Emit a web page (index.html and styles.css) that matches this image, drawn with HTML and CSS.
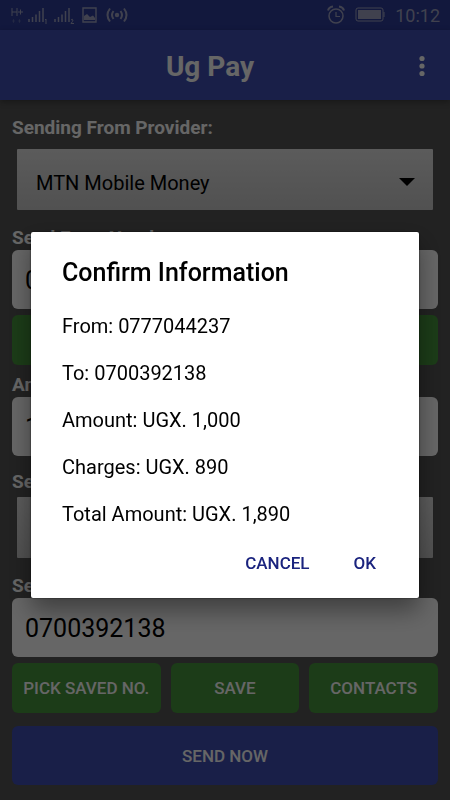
FILE: index.html
```html
<!DOCTYPE html>
<html lang="en">
<head>
    <meta charset="utf-8" />
    <meta name="viewport" content="width=device-width, initial-scale=1">
    <title>Ug Pay</title>
    <link rel="stylesheet" href="styles.css">
</head>

<body>
    <div class="status-bar">
        <svg width="120" height="20" viewBox="0 0 120 20" fill="none" stroke="currentColor">
            <!-- network type -->
            <path d="M2 3v8M7 3v8M2 7h5M8 7h5M10.500 4.500v5" />
            <path d="M2 16h3M3.500 14v4M8 16h3M9.500 14v4" opacity=".3" />
            <!-- signal 1 -->
            <path d="M19 14v3M22.500 12v5M26 9.500v7.500M29.500 6v11M33 3v14" stroke-width="1.500" />
            <path d="M35 15l1-1v5" />
            <!-- signal 2 -->
            <path d="M45 14v3M48.500 12v5M52 9.500v7.500M55.500 6v11M59 3v14" stroke-width="1.500" />
            <path d="M61 15q1.500-1.500 2 0q0 1-2 3.500h3" />
            <!-- picture -->
            <path d="M73 3h13v14H73z" stroke-width="1.400" />
            <path d="M74 15v-4l3-2 3 3 3-1.500 2 2.500v2z" fill="currentColor" stroke="none" />
            <!-- hotspot -->
            <circle cx="107" cy="10" r="2.200" fill="currentColor" stroke="none" />
            <path d="M103.500 6q-3 4 0 8M110.500 6q3 4 0 8M100 3.500q-5 6.500 0 13M114 3.500q5 6.500 0 13" stroke-width="2" />
        </svg>
        <div class="status-right">
            <svg width="18" height="20" viewBox="0 0 18 20" fill="none" stroke="currentColor">
                <circle cx="9" cy="11" r="7" stroke-width="1.500" />
                <path d="M9 7v4.500h4" stroke-width="1.200" />
                <path d="M1 5.500q1-3.500 5-4M17 5.500q-1-3.500-5-4" stroke-width="2" />
            </svg>
            <svg width="30" height="16" viewBox="0 0 30 16">
                <rect x="1" y="1" width="27" height="13" rx="2" fill="none" stroke="currentColor" />
                <rect x="3" y="3" width="23" height="9" fill="currentColor" />
                <path d="M29 5v5" stroke="currentColor" />
            </svg>
            <span>10:12</span>
        </div>
    </div>

    <header class="app-bar">
        <h1>Ug Pay</h1>
        <button class="menu-button" type="button" aria-label="More options">
            <svg width="8" height="24" viewBox="0 0 8 24" fill="currentColor">
                <circle cx="4" cy="4.500" r="2.600" />
                <circle cx="4" cy="12" r="2.600" />
                <circle cx="4" cy="19.500" r="2.600" />
            </svg>
        </button>
    </header>

    <form class="pay-form">
        <label for="from-provider">Sending From Provider:</label>
        <div class="spinner">
            <select id="from-provider">
                <option>MTN Mobile Money</option>
            </select>
            <svg width="16" height="8" viewBox="0 0 16 8"><path d="M0 0h16L8 8z" /></svg>
        </div>

        <label for="from-number">Send From Number:</label>
        <input id="from-number" type="text" value="0777044237">
        <div class="button-row">
            <button class="green" type="button">CONTACTS</button>
        </div>

        <label for="amount">Amount:</label>
        <input id="amount" type="text" value="1000">

        <label for="to-provider">Send To:</label>
        <div class="spinner to-spinner">
            <select id="to-provider">
                <option>Airtel Money</option>
            </select>
            <svg width="16" height="8" viewBox="0 0 16 8"><path d="M0 0h16L8 8z" /></svg>
        </div>

        <label for="to-number">Send To Number:</label>
        <input id="to-number" type="text" value="0700392138">
        <div class="button-row three">
            <button class="green" type="button">PICK SAVED NO.</button>
            <button class="green" type="button">SAVE</button>
            <button class="green" type="button">CONTACTS</button>
        </div>

        <button class="send" type="button">SEND NOW</button>
    </form>

    <div class="overlay">
        <div class="dialog" role="dialog" aria-labelledby="dialog-title">
            <h2 id="dialog-title">Confirm Information</h2>
            <p>From: 0777044237</p>
            <p>To: 0700392138</p>
            <p>Amount: UGX. 1,000</p>
            <p>Charges: UGX. 890</p>
            <p>Total Amount: UGX. 1,890</p>
            <div class="dialog-actions">
                <button type="button">CANCEL</button>
                <button type="button">OK</button>
            </div>
        </div>
    </div>
</body>
</html>
```
FILE: styles.css
```css
* {
    box-sizing: border-box;
}

body {
    margin: 0;
    min-height: 100vh;
    background: #555;
    color: #fff;
    font-family: Roboto, "Liberation Sans", sans-serif;
}

button, input, select {
    font-family: inherit;
    border: none;
    margin: 0;
}

h1, h2, p {
    margin: 0;
}

.status-bar {
    display: flex;
    align-items: center;
    justify-content: space-between;
    height: 30px;
    padding: 0 10px;
    background: #2d3c99;
    color: #a0a4c4;
    font-size: 18px;
}

.status-right {
    display: flex;
    align-items: center;
    gap: 10px;
}

.app-bar {
    display: flex;
    align-items: center;
    height: 70px;
    padding: 2px 10px 0 16px;
    background: #3f4fb3;
    box-shadow: 0 2px 6px rgba(0, 0, 0, 0.3);
}

    .app-bar h1 {
        flex: 1;
        font-size: 28px;
        text-align: center;
    }

.menu-button {
    display: flex;
    justify-content: center;
    width: 36px;
    padding: 0;
    background: none;
    color: #fff;
}

.pay-form {
    display: flex;
    flex-direction: column;
    padding: 16px 12px;
}

    .pay-form label {
        font-size: 18px;
        font-weight: bold;
        line-height: 24px;
    }

    .pay-form input {
        width: 100%;
        height: 59px;
        padding: 2px 13px 0 13px;
        border-radius: 6px;
        background: #fff;
        color: #000;
        font-size: 25px;
    }

.spinner {
    position: relative;
    margin: 9px 5px 16px 5px;
}

    .spinner select {
        display: block;
        appearance: none;
        width: 100%;
        height: 61px;
        padding: 6px 20px 0 19px;
        border-radius: 1px;
        background: linear-gradient(#e4e4e4, #cacaca);
        color: #000;
        font-size: 20px;
    }

    .spinner svg {
        position: absolute;
        right: 18px;
        top: 29px;
    }

.to-spinner {
    margin-top: 3px;
}

.button-row {
    display: grid;
    gap: 10px;
    margin: 6px 0 8px 0;
}

.three {
    grid-template-columns: 15fr 13fr 13fr;
}

.green, .send {
    border-radius: 6px;
    color: #fff;
    font-size: 17px;
    font-weight: 500;
}

.green {
    height: 50px;
    padding: 0;
    background: #46963c;
}

#amount {
    margin-bottom: 14px;
}

.pay-form label {
    font-size: 19px;
}

.send {
    height: 59px;
    margin-top: 5px;
    background: #3f4fb3;
}

.overlay {
    position: fixed;
    inset: 0;
    display: flex;
    align-items: center;
    justify-content: center;
    padding: 30px 31px 0 31px;
    background: rgba(0, 0, 0, 0.6);
}

.dialog {
    display: flex;
    flex-direction: column;
    gap: 23px;
    width: 100%;
    padding: 25px 32px 17px 31px;
    border-radius: 2px;
    background: #fff;
    color: #000;
    box-shadow: 0 12px 24px rgba(0, 0, 0, 0.4), 0 0 2px rgba(0, 0, 0, 0.8);
}

    .dialog h2 {
        margin-bottom: 2px;
        font-size: 25px;
        font-weight: 500;
        line-height: 32px;
    }

    .dialog p {
        font-size: 20px;
        line-height: 24px;
    }

.dialog-actions {
    display: flex;
    justify-content: flex-end;
    gap: 22px;
    margin-top: -4px;
}

    .dialog-actions button {
        height: 36px;
        padding: 0 11px;
        background: none;
        color: #1a237e;
        font-size: 17px;
        font-weight: 500;
    }
```
